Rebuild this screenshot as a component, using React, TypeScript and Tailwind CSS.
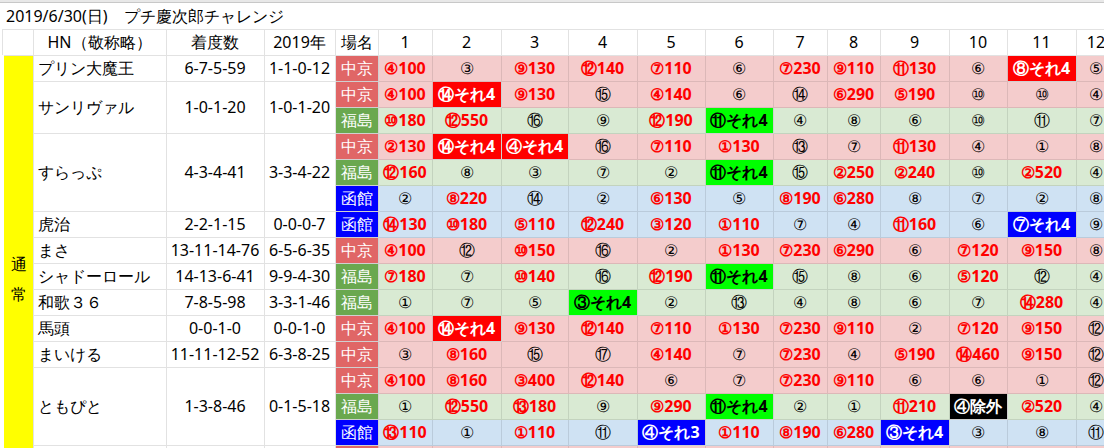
import React from 'react'

type Venue = '中京' | '福島' | '函館'

const venueCls: Record<Venue, string> = {
    '中京': 'bg-[#e06666]',
    '福島': 'bg-[#6aa84f]',
    '函館': 'bg-[#0000ff]',
}
const rowCls: Record<Venue, string> = {
    '中京': 'bg-[#f4cccc] border-[#dcb8b8]',
    '福島': 'bg-[#d9ead3] border-[#c3d3be]',
    '函館': 'bg-[#cfe2f3] border-[#bacbdb]',
}

// cell codes: "r:" red highlight, "g:" green, "b:" blue, "k:" black
const rows: { name?: string; span?: number; c?: string; y?: string; v: Venue; cells: string[] }[] = [
    { name: 'プリン大魔王', span: 1, c: '6-7-5-59', y: '1-1-0-12', v: '中京', cells: ['④100', '③', '⑨130', '⑫140', '⑦110', '⑥', '⑦230', '⑨110', '⑪130', '⑥', 'r:⑧それ4', '⑤'] },
    { name: 'サンリヴァル', span: 2, c: '1-0-1-20', y: '1-0-1-20', v: '中京', cells: ['④100', 'r:⑭それ4', '⑨130', '⑮', '④140', '⑥', '⑭', '⑥290', '⑤190', '⑩', '⑩', '④'] },
    { v: '福島', cells: ['⑩180', '⑫550', '⑯', '⑨', '⑫190', 'g:⑪それ4', '④', '⑧', '⑥', '⑩', '⑪', '⑦'] },
    { name: 'すらっぷ', span: 3, c: '4-3-4-41', y: '3-3-4-22', v: '中京', cells: ['②130', 'r:⑭それ4', 'r:④それ4', '⑯', '⑦110', '①130', '⑬', '⑦', '⑪130', '④', '①', '⑧'] },
    { v: '福島', cells: ['⑫160', '⑧', '③', '⑦', '②', 'g:⑪それ4', '⑮', '②250', '②240', '⑩', '②520', '④'] },
    { v: '函館', cells: ['②', '⑧220', '⑭', '②', '⑥130', '⑤', '⑧190', '⑥280', '⑧', '⑦', '②', '⑧'] },
    { name: '虎治', span: 1, c: '2-2-1-15', y: '0-0-0-7', v: '函館', cells: ['⑭130', '⑩180', '⑤110', '⑫240', '③120', '①110', '⑦', '④', '⑪160', '⑥', 'b:⑦それ4', '⑨'] },
    { name: 'まさ', span: 1, c: '13-11-14-76', y: '6-5-6-35', v: '中京', cells: ['④100', '⑫', '⑩150', '⑯', '②', '①130', '⑦230', '⑥290', '⑥', '⑦120', '⑨150', '⑧'] },
    { name: 'シャドーロール', span: 1, c: '14-13-6-41', y: '9-9-4-30', v: '福島', cells: ['⑦180', '⑦', '⑩140', '⑯', '⑫190', 'g:⑪それ4', '⑮', '⑧', '⑥', '⑤120', '⑫', '④'] },
    { name: '和歌３６', span: 1, c: '7-8-5-98', y: '3-3-1-46', v: '福島', cells: ['①', '⑦', '⑤', 'g:③それ4', '②', '⑬', '④', '⑧', '⑥', '⑦', '⑭280', '④'] },
    { name: '馬頭', span: 1, c: '0-0-1-0', y: '0-0-1-0', v: '中京', cells: ['④100', 'r:⑭それ4', '⑨130', '⑫140', '⑦110', '①130', '⑦230', '⑨110', '②', '⑦120', '⑨150', '⑫'] },
    { name: 'まいける', span: 1, c: '11-11-12-52', y: '6-3-8-25', v: '中京', cells: ['③', '⑧160', '⑮', '⑰', '④140', '⑦', '⑦230', '④', '⑤190', '⑭460', '⑨150', '⑫'] },
    { name: 'ともぴと', span: 3, c: '1-3-8-46', y: '0-1-5-18', v: '中京', cells: ['④100', '⑧160', '③400', '⑫140', '⑥', '⑦', '⑦230', '⑨110', '⑥', '⑥', '①', '⑫'] },
    { v: '福島', cells: ['①', '⑫550', '⑬180', '⑨', '⑨290', 'g:⑪それ4', '②', '①', '⑪210', 'k:④除外', '②520', '④'] },
    { v: '函館', cells: ['⑬110', '①', '①110', '⑪', 'b:④それ3', '①110', '⑧190', '⑥280', 'b:③それ4', '③', '⑧', '⑪'] },
]

const widths = [31, 133, 98, 71, 43, 54, 69, 67, 69, 68, 68, 54, 53, 69, 58, 69, 40]

const hi: Record<string, string> = {
    r: 'bg-[#ff0000] text-white font-bold',
    g: 'bg-[#00ff00] text-black font-bold',
    b: 'bg-[#0000ff] text-white font-bold',
    k: 'bg-black text-white font-bold',
}

function Cell({ val, v }: { val: string; v: Venue }) {
    const m = val.match(/^([rgbk]):(.*)$/)
    if (m) {
        return <td className={`border border-[#d0d0d0] text-center whitespace-nowrap overflow-hidden ${hi[m[1]]}`}>{m[2]}</td>
    }
    const isPay = val.length > 1
    return (
        <td className={`border text-center whitespace-nowrap overflow-hidden ${rowCls[v]} ${isPay ? 'text-[#ff0000] font-bold' : 'text-black'}`}>
            {val}
        </td>
    )
}

export default function App() {
    return (
        <div className="w-[1104px] h-[448px] overflow-hidden bg-white text-[16px] text-black [font-family:'Liberation_Sans','Noto_Sans_CJK_JP',sans-serif]">
            <div className="h-[3px] bg-[#e8e8e8] border-b border-[#c8c8c8]" />
            <table className="table-fixed border-collapse w-[1112px]">
                <colgroup>
                    {widths.map((w, i) => <col key={i} style={{ width: w }} />)}
                </colgroup>
                <tbody>
                    <tr className="h-[26px]">
                        <td colSpan={17} className="border-b border-[#e2e2e2] pl-1 whitespace-nowrap">2019/6/30(日)　プチ慶次郎チャレンジ</td>
                    </tr>
                    <tr className="h-[26px]">
                        <td className="border border-[#e2e2e2]" />
                        <td className="border border-[#e2e2e2] text-center">HN（敬称略）</td>
                        <td className="border border-[#e2e2e2] text-center">着度数</td>
                        <td className="border border-[#e2e2e2] text-center">2019年</td>
                        <td className="border border-[#e2e2e2] text-center">場名</td>
                        {Array.from({ length: 12 }, (_, i) => (
                            <td key={i} className="border border-[#e2e2e2] text-center">{i + 1}</td>
                        ))}
                    </tr>
                    {rows.map((r, i) => (
                        <tr key={i} className="h-[26px]">
                            {i === 0 && (
                                <td rowSpan={16} className="border-l-4 border-l-white border-r border-[#e2e2e2] bg-[#ffff00] align-top p-0">
                                    <div className="flex flex-col items-center leading-[30px] pt-[193px] pl-0.5">
                                        <span>通</span>
                                        <span>常</span>
                                    </div>
                                </td>
                            )}
                            {r.name && (
                                <>
                                    <td rowSpan={r.span} className="border border-[#e2e2e2] pl-1 whitespace-nowrap">{r.name}</td>
                                    <td rowSpan={r.span} className="border border-[#e2e2e2] text-center whitespace-nowrap">{r.c}</td>
                                    <td rowSpan={r.span} className="border border-[#e2e2e2] text-center whitespace-nowrap">{r.y}</td>
                                </>
                            )}
                            <td className={`border border-[#d0d0d0] text-center text-white ${venueCls[r.v]}`}>{r.v}</td>
                            {r.cells.map((c, j) => <Cell key={j} val={c} v={r.v} />)}
                        </tr>
                    ))}
                    <tr className="h-[26px]">
                        <td className="border border-[#e2e2e2]" />
                        <td className="border border-[#e2e2e2]" />
                        <td className="border border-[#e2e2e2]" />
                        <td className="bg-[#e06666]" />
                        {Array.from({ length: 12 }, (_, i) => <td key={i} className="bg-[#f4cccc] border border-[#dcb8b8]" />)}
                    </tr>
                </tbody>
            </table>
        </div>
    )
}
